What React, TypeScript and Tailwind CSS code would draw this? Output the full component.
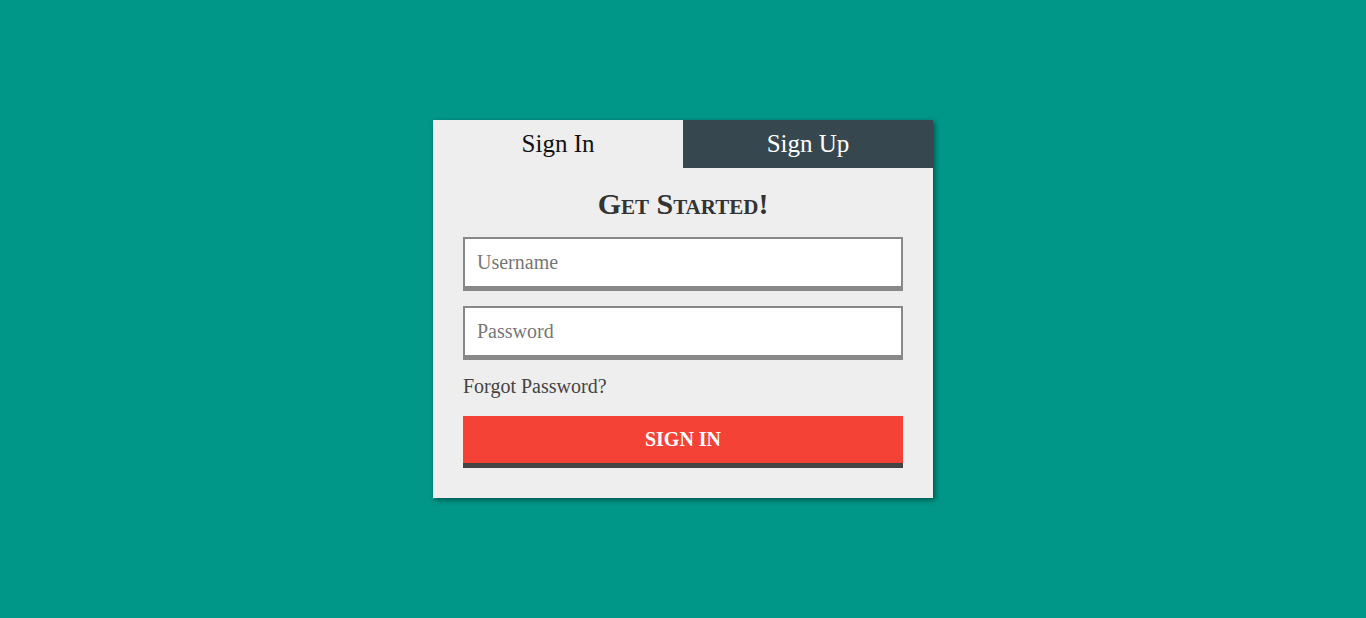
import { useState } from 'react'

type Tab = 'signin' | 'signup'

export default function App() {
  const [tab, setTab] = useState<Tab>('signin')

  return (
    <div className="flex min-h-[618px] w-full items-start justify-center bg-[#009688] pt-[120px] font-['Liberation_Serif',_'Times_New_Roman',_serif]">
      <div className="w-[500px] bg-[#eeeeee] shadow-[2px_2px_5px_rgba(0,0,0,0.45)]">
        {/* tabs */}
        <div className="flex h-12">
          <button
            type="button"
            onClick={() => setTab('signin')}
            className={`flex-1 text-[25px] leading-[48px] ${
              tab === 'signin' ? 'bg-[#eeeeee] text-[#111]' : 'bg-[#37474f] text-white'
            }`}
          >
            Sign In
          </button>
          <button
            type="button"
            onClick={() => setTab('signup')}
            className={`flex-1 text-[25px] leading-[48px] ${
              tab === 'signup' ? 'bg-[#eeeeee] text-[#111]' : 'bg-[#37474f] text-white'
            }`}
          >
            Sign Up
          </button>
        </div>

        <form className="px-[30px] pb-[30px]" onSubmit={(e) => e.preventDefault()}>
          <h2 className="mt-[19px] mb-[16px] text-center text-[30px] leading-[34px] font-bold text-[#333] [font-variant:small-caps]">
            Get Started!
          </h2>

          <input
            type="text"
            placeholder="Username"
            className="block h-[54px] w-full border-2 border-b-[5px] border-[#888] bg-white px-3 text-[20px] text-[#333] outline-none placeholder:text-[#777]"
          />
          <input
            type="password"
            placeholder="Password"
            className="mt-[15px] block h-[54px] w-full border-2 border-b-[5px] border-[#888] bg-white px-3 text-[20px] text-[#333] outline-none placeholder:text-[#777]"
          />

          <a href="#" className="mt-[15px] block text-[20px] leading-[23px] text-[#444]">
            Forgot Password?
          </a>

          <button
            type="submit"
            className="mt-[18px] block h-[52px] w-full border-b-[5px] border-[#444] bg-[#f44336] pb-px text-[20px] font-bold text-white uppercase"
          >
            Sign In
          </button>
        </form>
      </div>
    </div>
  )
}
